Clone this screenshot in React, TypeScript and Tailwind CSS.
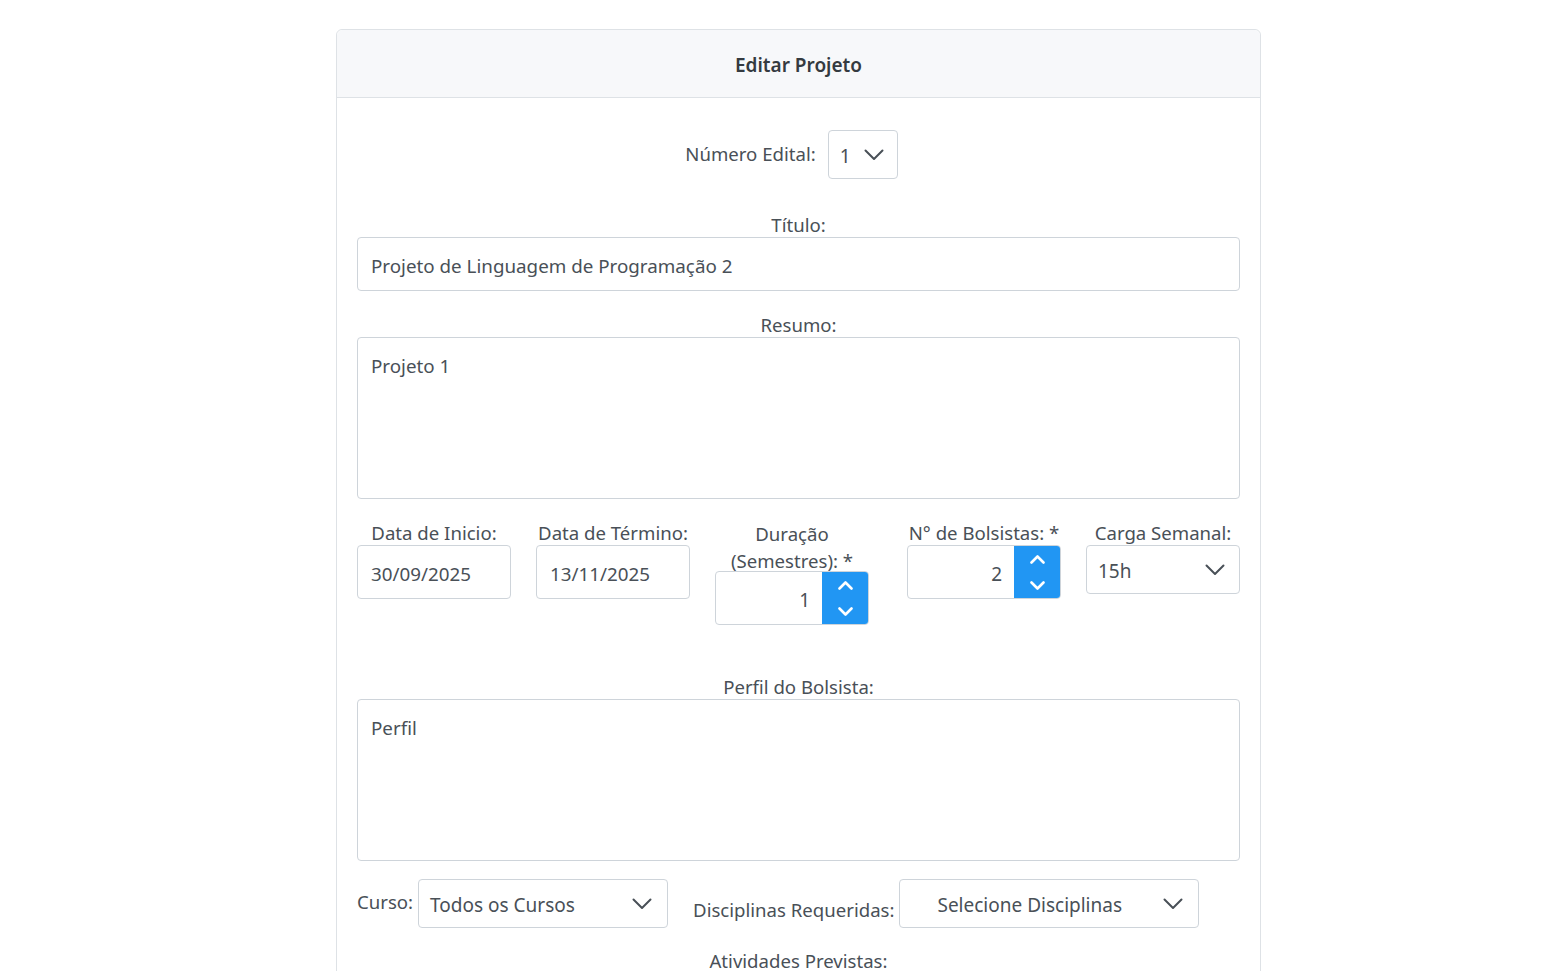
const font = { fontFamily: '"Noto Sans", "Open Sans", sans-serif' }

function Chevron({ className = '' }: { className?: string }) {
  return (
    <svg width="20" height="12" viewBox="0 0 20 12" className={className} fill="none">
      <polyline points="1.5,1.5 10,10 18.5,1.5" stroke="#495057" strokeWidth="2" strokeLinecap="round" strokeLinejoin="round" />
    </svg>
  )
}

function SpinArrow({ up }: { up?: boolean }) {
  return (
    <svg width="15" height="9" viewBox="0 0 15 9" fill="none">
      <polyline
        points={up ? '1.5,7.5 7.5,1.5 13.5,7.5' : '1.5,1.5 7.5,7.5 13.5,1.5'}
        stroke="white"
        strokeWidth="2.6"
        strokeLinecap="round"
        strokeLinejoin="round"
      />
    </svg>
  )
}

function Select({ value, className = '' }: { value: string; className?: string }) {
  return (
    <div
      className={`flex items-center justify-between h-[49px] border border-[#ced4da] rounded bg-white text-[#495057] text-[19px] ${className}`}
    >
      <span className="pt-[3px]">{value}</span>
      <Chevron />
    </div>
  )
}

function NumberInput({ value }: { value: string }) {
  return (
    <div className="flex h-[54px] w-[154px] border border-[#ced4da] rounded overflow-hidden bg-white">
      <div className="flex-1 flex items-center justify-end pr-3 pt-[3px] text-[#495057] text-[19px]">{value}</div>
      <div className="w-[47px] bg-[#2196f3] flex flex-col items-center justify-center gap-[17px] -my-px -mr-px">
        <SpinArrow up />
        <SpinArrow />
      </div>
    </div>
  )
}

function TextBox({ value }: { value: string }) {
  return (
    <div className="h-[54px] border border-[#ced4da] rounded flex items-center px-[13px] pt-[3px] text-[#495057] text-[18.8px] bg-white">
      {value}
    </div>
  )
}

function TextArea({ value }: { value?: string }) {
  return (
    <div className="h-[162px] border border-[#ced4da] rounded px-[13px] pt-[16px] text-[#495057] text-[18.8px] bg-white">
      {value}
    </div>
  )
}

export default function App() {
  return (
    <div className="min-h-screen bg-white pt-[29px] pb-10 text-[18.6px]" style={font}>
      <div className="ml-[336px] w-[925px] border border-[#dee2e6] rounded-md">
        {/* Header */}
        <div className="h-[68px] flex items-center justify-center bg-[#f7f8fa] border-b border-[#dee2e6] rounded-t-md">
          <h1 className="text-[19px] font-semibold text-[#343a40] mt-[3px]">Editar Projeto</h1>
        </div>

        <div className="px-5 pt-8 text-[#495057] leading-6">
          {/* Número Edital */}
          <div className="flex items-center justify-center gap-3 pr-[14px]">
            <label className="-mt-[2px]">Número Edital:</label>
            <Select value="1" className="w-[70px] pl-[11px] pr-[13px]" />
          </div>

          {/* Título */}
          <div className="mt-[34px] text-center">Título:</div>
          <TextBox value="Projeto de Linguagem de Programação 2" />

          {/* Resumo */}
          <div className="mt-[22px] text-center">Resumo:</div>
          <TextArea value="Projeto 1" />

          {/* Datas e números */}
          <div className="mt-[22px] flex items-start">
            <div className="w-[154px] flex flex-col">
              <div className="text-center">Data de Inicio:</div>
              <TextBox value="30/09/2025" />
            </div>
            <div className="w-[154px] ml-[25px] flex flex-col">
              <div className="text-center">Data de Término:</div>
              <TextBox value="13/11/2025" />
            </div>
            <div className="w-[154px] ml-[25px] flex flex-col">
              <div className="text-center leading-[27px] -mt-[1px] mb-[-3px]">
                Duração
                <br />
                (Semestres): *
              </div>
              <NumberInput value="1" />
            </div>
            <div className="w-[154px] ml-[38px] flex flex-col">
              <div className="text-center">N° de Bolsistas: *</div>
              <NumberInput value="2" />
            </div>
            <div className="w-[154px] ml-[25px] flex flex-col">
              <div className="text-center">Carga Semanal:</div>
              <Select value="15h" className="pl-[11px] pr-[14px]" />
            </div>
          </div>

          {/* Perfil */}
          <div className="mt-[50px] text-center">Perfil do Bolsista:</div>
          <TextArea value="Perfil" />

          {/* Curso / Disciplinas */}
          <div className="mt-[18px] flex items-start">
            <label className="mt-[11px]">Curso:</label>
            <Select value="Todos os Cursos" className="ml-[5px] w-[250px] pl-[11px] pr-[15px]" />
            <label className="ml-[25px] mt-[19px]">Disciplinas Requeridas:</label>
            <Select value="Selecione Disciplinas" className="ml-[5px] w-[300px] pl-[37px] pr-[15px]" />
          </div>

          {/* Atividades */}
          <div className="mt-[21px] text-center">Atividades Previstas:</div>
          <div className="mb-6">
            <TextArea />
          </div>
        </div>
      </div>
    </div>
  )
}
